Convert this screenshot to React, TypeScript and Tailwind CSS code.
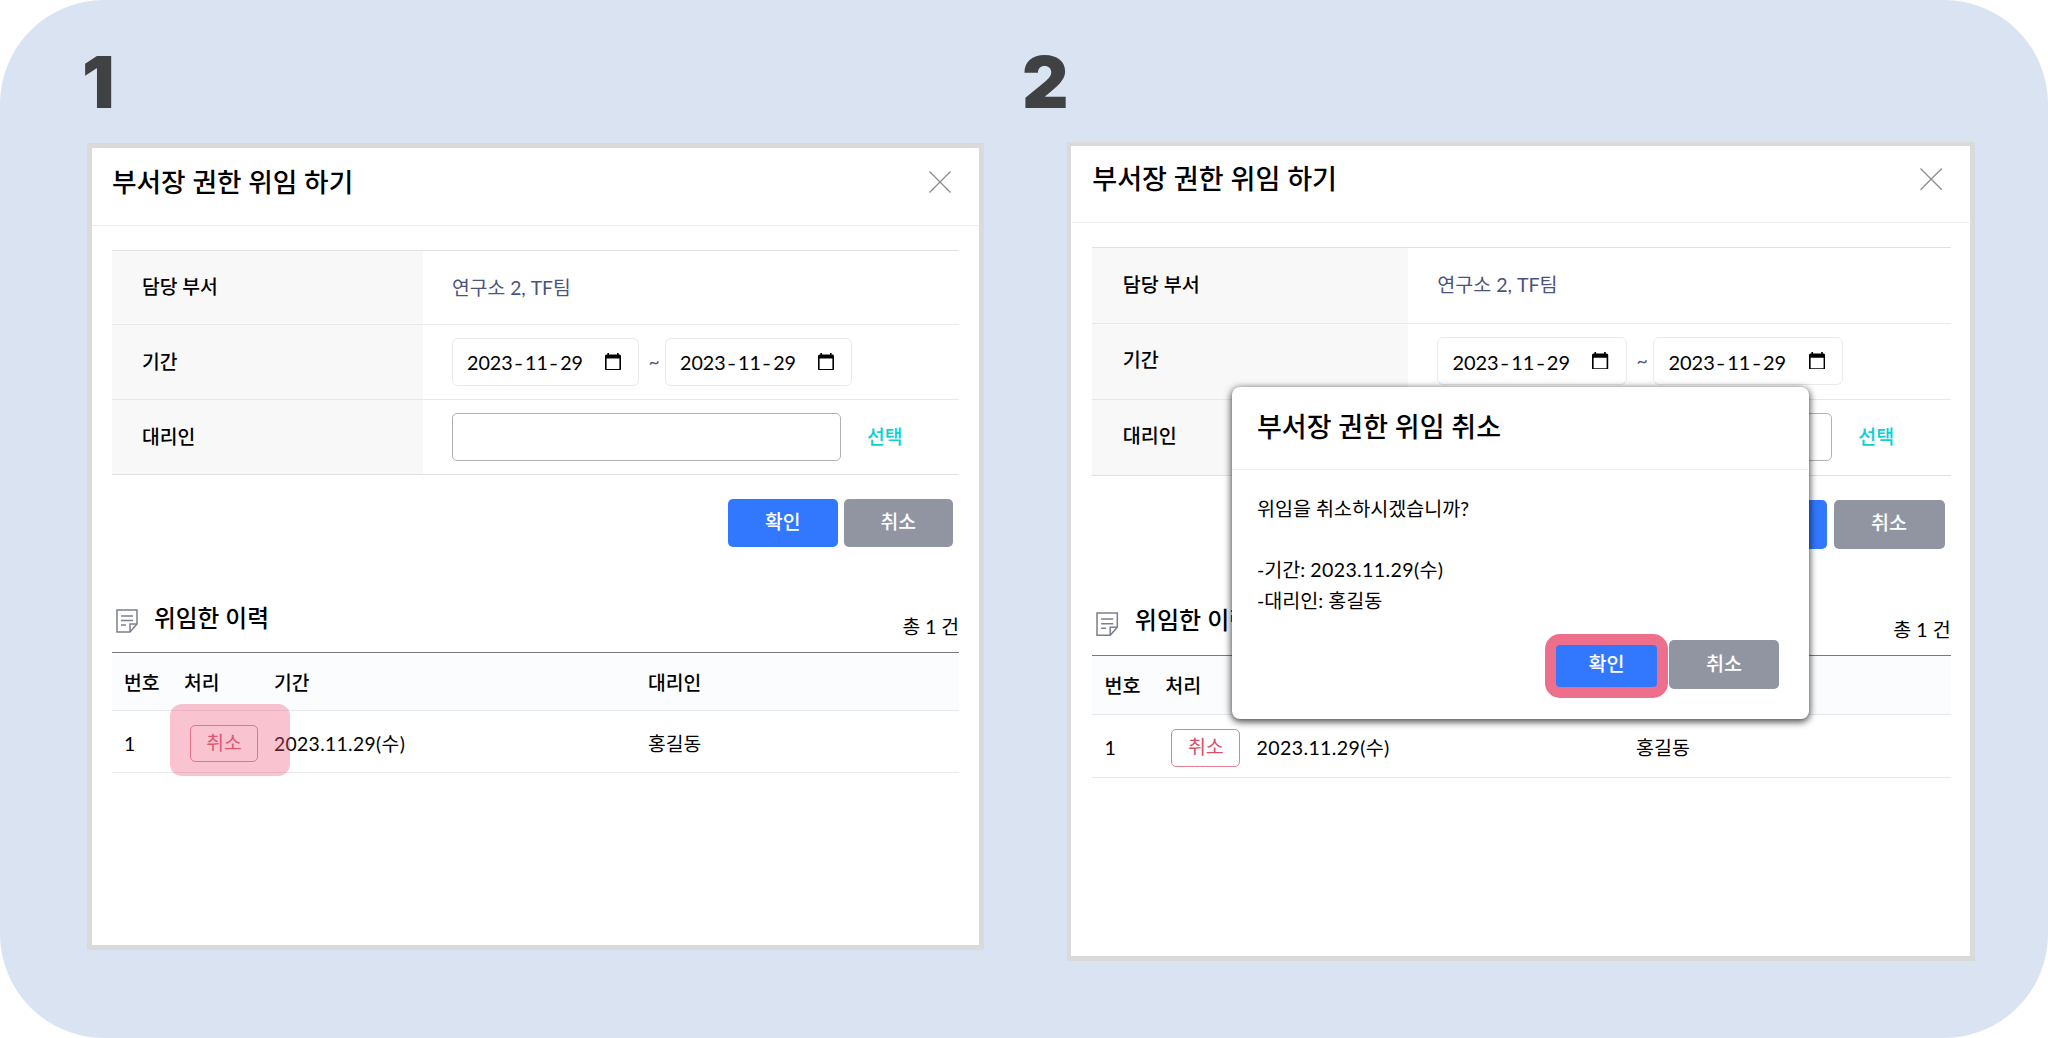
import * as React from 'react';
import clsx from 'clsx';

interface HistoryRow {
  no: number;
  period: string;
  deputy: string;
}

const HISTORY: HistoryRow[] = [{ no: 1, period: '2023.11.29(수)', deputy: '홍길동' }];

export default function App() {
  return (
    <main className="flex h-[1038px] w-[2048px] overflow-hidden rounded-[104px] bg-[#dae3f1] font-['Lato','Noto_Sans_CJK_KR',sans-serif] text-[19.3px] leading-7 text-black">
      <section className="w-[1067px] shrink-0 pt-[38px] pl-[87px]">
        <StepNumber className="-ml-[5px]">1</StepNumber>
        <div className="mt-[15px] h-[807px] w-[897px] border-5 border-[#d9dbda] bg-white">
          <DelegationPanel headerClassName="h-[78px]" highlightCancel />
        </div>
      </section>
      <section className="shrink-0 pt-[38px]">
        <StepNumber className="-ml-[45px]">2</StepNumber>
        <div className="relative mt-[14px] h-[819px] w-[908px] border-4 border-r-5 border-b-5 border-[#d9dada] bg-white">
          <div className="-mr-px pl-px [zoom:1.0145]">
            <DelegationPanel headerClassName="h-[76px]" />
          </div>
          <ConfirmDialog />
        </div>
      </section>
    </main>
  );
}

function StepNumber({ children, className }: { children: React.ReactNode; className?: string }) {
  return (
    <div
      className={clsx(
        "h-[90px] font-['Inter',sans-serif] text-[72px] leading-[88px] font-black text-[#404142]",
        className,
      )}
    >
      {children}
    </div>
  );
}

function DelegationPanel({
  headerClassName,
  highlightCancel,
}: {
  headerClassName: string;
  highlightCancel?: boolean;
}) {
  return (
    <div>
      <header
        className={clsx(
          'flex items-center justify-between border-b border-[#ededed] pr-[28px] pb-[10px] pl-5',
          headerClassName,
        )}
      >
        <h2 className="text-[26.7px] leading-9 font-medium">부서장 권한 위임 하기</h2>
        <CloseIcon />
      </header>

      <div className="px-5 pt-[24px]">
        <div className="border-y border-[#dfe1e3]">
          <FormRow label="담당 부서" className="h-[74px] border-b">
            <span className="text-[#4b5380]">연구소 2, TF팀</span>
          </FormRow>
          <FormRow label="기간" className="h-[75px] border-b">
            <DateField value="2023-11-29" />
            <span className="w-[26px] pl-[4px] text-center text-[#4b5380]">~</span>
            <DateField value="2023-11-29" />
          </FormRow>
          <FormRow label="대리인" className="h-[74px]">
            <div className="h-12 w-[389px] rounded-[5px] border border-[#b0b1b5] bg-white" />
            <button className="ml-[26px] font-medium text-[#10cfd4]">선택</button>
          </FormRow>
        </div>

        <div className="mt-[24px] flex justify-end gap-[6px] pr-[6px]">
          <button className="h-12 w-[109.5px] rounded-[5px] bg-[#3278ff] pb-[2px] font-medium text-white">확인</button>
          <button className="h-12 w-[109.5px] rounded-[5px] bg-[#9195a2] pb-[2px] font-medium text-white">취소</button>
        </div>

        <div className="mt-[48px] flex h-[57px] justify-between">
          <div className="flex items-start">
            <NoteIcon />
            <h3 className="ml-[16px] pt-[7px] text-[23.7px] leading-8 font-medium">위임한 이력</h3>
          </div>
          <span className="pt-[18px]">총 {HISTORY.length} 건</span>
        </div>

        <div className="border-t-[1.5px] border-[#777a83]">
          <div className="flex h-[58px] items-center border-b border-[#e6e8e9] bg-[#fbfcfe] pt-[3px] pl-3 font-medium">
            <span className="w-[60px]">번호</span>
            <span className="w-[90px]">처리</span>
            <span className="w-[374px]">기간</span>
            <span>대리인</span>
          </div>
          {HISTORY.map((row) => (
            <div key={row.no} className="flex h-[62px] items-center border-b border-[#e6e8e9] pt-[4px] pl-3">
              <span className="w-[60px]">{row.no}</span>
              <span className="relative w-[90px] pl-[6px]">
                <button className="h-[37px] w-[68px] rounded-[5px] border border-[#e08090] pb-px text-[#d8506a]">
                  취소
                </button>
                {highlightCancel && (
                  <span className="absolute -top-[21px] -left-[14px] h-[72px] w-[120px] rounded-xl bg-[#f06080]/37" />
                )}
              </span>
              <span className="w-[374px] tracking-[0.35px] [font-kerning:none]">{row.period}</span>
              <span>{row.deputy}</span>
            </div>
          ))}
        </div>
      </div>
    </div>
  );
}

function FormRow({
  label,
  className,
  children,
}: {
  label: string;
  className: string;
  children: React.ReactNode;
}) {
  return (
    <div className={clsx('flex border-[#e6e8e9]', className)}>
      <div className="flex w-[311px] items-center bg-[#f8f8f8] pb-px pl-[30px] font-medium">{label}</div>
      <div className="flex items-center pl-[29px]">{children}</div>
    </div>
  );
}

function DateField({ value }: { value: string }) {
  const [y, m, d] = value.split('-');
  return (
    <div className="flex h-12 w-[187px] items-center justify-between rounded-[6px] border border-[#e9e9eb] bg-white pr-[17px] pl-[14px]">
      <span className="flex gap-[2.5px] pt-[2px] text-[19.7px] [font-kerning:none]">
        <span>{y}</span>
        <span className="scale-x-125">-</span>
        <span>{m}</span>
        <span className="scale-x-125">-</span>
        <span>{d}</span>
      </span>
      <svg viewBox="2 1 20 22" className="-mt-px h-[17.6px] w-4 fill-black">
        <path d="M20 3h-1V1h-2v2H7V1H5v2H4c-1.1 0-2 .9-2 2v16c0 1.1.9 2 2 2h16c1.1 0 2-.9 2-2V5c0-1.1-.9-2-2-2zm0 18H4V8h16v13z" />
      </svg>
    </div>
  );
}

function ConfirmDialog() {
  return (
    <div className="absolute top-[241px] left-[161px] h-[332px] w-[577px] rounded-lg bg-white text-[19.6px] shadow-[0_2px_7px_1px_rgba(0,0,0,0.7)]">
      <div className="flex h-[83px] items-center border-b border-[#f0f0f0] pb-[3px] pl-[25px]">
        <h2 className="text-[27px] leading-9 font-medium">부서장 권한 위임 취소</h2>
      </div>
      <div className="pt-[23px] pl-[25px] leading-[31px] [font-kerning:none]">
        <p>위임을 취소하시겠습니까?</p>
        <p className="mt-[30px]">
          -기간: <span className="tracking-[0.35px]">2023.11.29(수)</span>
        </p>
        <p>-대리인: 홍길동</p>
      </div>
      <div className="mt-[24px] flex justify-end pr-[30px]">
        <button className="-mt-[6px] mr-[1px] h-[64px] w-[123px] rounded-[15px] border-[11px] border-[#ee6f8b] bg-[#ee6f8b]">
          <span className="flex h-full items-center justify-center rounded-[4px] bg-[#3278ff] pb-[5px] font-medium text-white">
            확인
          </span>
        </button>
        <button className="h-[49px] w-[110px] rounded-[5px] bg-[#9195a2] pb-[2px] font-medium text-white">
          취소
        </button>
      </div>
    </div>
  );
}

function CloseIcon() {
  return (
    <svg viewBox="0 0 22 22" className="h-[22px] w-[22px] stroke-[#8c8d90]" strokeWidth="1.3">
      <path d="M0.5 0.5l21 21M21.5 0.5l-21 21" />
    </svg>
  );
}

function NoteIcon() {
  return (
    <svg
      viewBox="0 0 22 24"
      className="mt-[14px] ml-[4px] h-6 w-[22px] fill-none stroke-[#7c7f8e]"
      strokeWidth="1.5"
    >
      <path d="M1 1h20v14l-7 8H1zM21 15h-7v8M5 7h12M5 11.500h12M5 16h5" />
    </svg>
  );
}
